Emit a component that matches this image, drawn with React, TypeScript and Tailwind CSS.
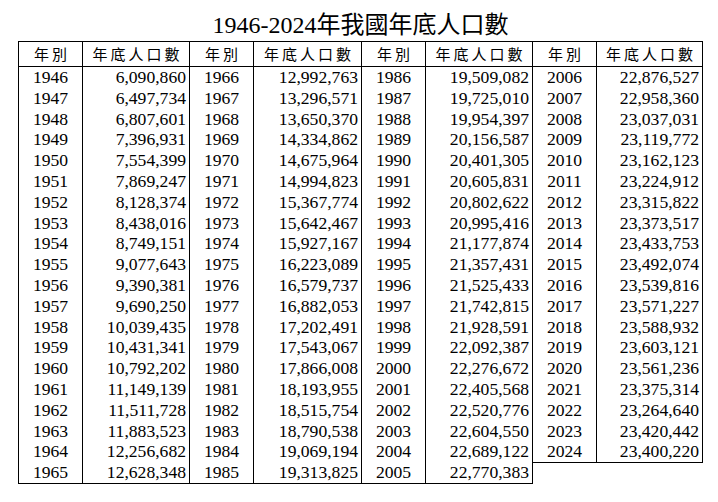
const data: [string, string][][] = [
  [
    ["1946", "6,090,860"], ["1947", "6,497,734"], ["1948", "6,807,601"], ["1949", "7,396,931"],
    ["1950", "7,554,399"], ["1951", "7,869,247"], ["1952", "8,128,374"], ["1953", "8,438,016"],
    ["1954", "8,749,151"], ["1955", "9,077,643"], ["1956", "9,390,381"], ["1957", "9,690,250"],
    ["1958", "10,039,435"], ["1959", "10,431,341"], ["1960", "10,792,202"], ["1961", "11,149,139"],
    ["1962", "11,511,728"], ["1963", "11,883,523"], ["1964", "12,256,682"], ["1965", "12,628,348"],
  ],
  [
    ["1966", "12,992,763"], ["1967", "13,296,571"], ["1968", "13,650,370"], ["1969", "14,334,862"],
    ["1970", "14,675,964"], ["1971", "14,994,823"], ["1972", "15,367,774"], ["1973", "15,642,467"],
    ["1974", "15,927,167"], ["1975", "16,223,089"], ["1976", "16,579,737"], ["1977", "16,882,053"],
    ["1978", "17,202,491"], ["1979", "17,543,067"], ["1980", "17,866,008"], ["1981", "18,193,955"],
    ["1982", "18,515,754"], ["1983", "18,790,538"], ["1984", "19,069,194"], ["1985", "19,313,825"],
  ],
  [
    ["1986", "19,509,082"], ["1987", "19,725,010"], ["1988", "19,954,397"], ["1989", "20,156,587"],
    ["1990", "20,401,305"], ["1991", "20,605,831"], ["1992", "20,802,622"], ["1993", "20,995,416"],
    ["1994", "21,177,874"], ["1995", "21,357,431"], ["1996", "21,525,433"], ["1997", "21,742,815"],
    ["1998", "21,928,591"], ["1999", "22,092,387"], ["2000", "22,276,672"], ["2001", "22,405,568"],
    ["2002", "22,520,776"], ["2003", "22,604,550"], ["2004", "22,689,122"], ["2005", "22,770,383"],
  ],
  [
    ["2006", "22,876,527"], ["2007", "22,958,360"], ["2008", "23,037,031"], ["2009", "23,119,772"],
    ["2010", "23,162,123"], ["2011", "23,224,912"], ["2012", "23,315,822"], ["2013", "23,373,517"],
    ["2014", "23,433,753"], ["2015", "23,492,074"], ["2016", "23,539,816"], ["2017", "23,571,227"],
    ["2018", "23,588,932"], ["2019", "23,603,121"], ["2020", "23,561,236"], ["2021", "23,375,314"],
    ["2022", "23,264,640"], ["2023", "23,420,442"], ["2024", "23,400,220"],
  ],
];

// border setup per column group (group 4 shares its left line with group 3)
const groupCls = [
  "w-[171px] border-l",
  "w-[172px] border-l",
  "w-[172px] border-l border-r",
  "w-[170px] border-r",
];

function Group({ rows, cls }: { rows: [string, string][]; cls: string }) {
  return (
    <div className={`${cls} border-t border-b border-black`}>
      <div className="flex h-[25px] border-b border-black items-center font-['Noto_Sans_CJK_TC',sans-serif] text-[15px] tracking-[3px] leading-[24px]">
        <div className="w-[64px] h-full border-r border-black text-center pl-[3px]">年別</div>
        <div className="flex-1 text-center pl-[3px]">年底人口數</div>
      </div>
      {rows.map(([year, value]) => (
        <div key={year} className="flex h-[20.8px] leading-[20.8px] text-[17.6px]">
          <div className="w-[64px] h-full border-r border-black text-center">{year}</div>
          <div className="flex-1 text-right pr-[3px]">{value}</div>
        </div>
      ))}
    </div>
  );
}

export default function App() {
  return (
    <div className="w-[718px] h-[502px] bg-white pl-[18px] text-black font-['Liberation_Serif','Noto_Sans_CJK_TC',serif]">
      <div className="w-[685px] h-[41px] pt-[10px] text-center text-[24px] leading-[30px]">
        1946-2024年我國年底人口數
      </div>
      <div className="flex items-start">
        {data.map((rows, i) => (
          <Group key={i} rows={rows} cls={groupCls[i]} />
        ))}
      </div>
    </div>
  );
}
